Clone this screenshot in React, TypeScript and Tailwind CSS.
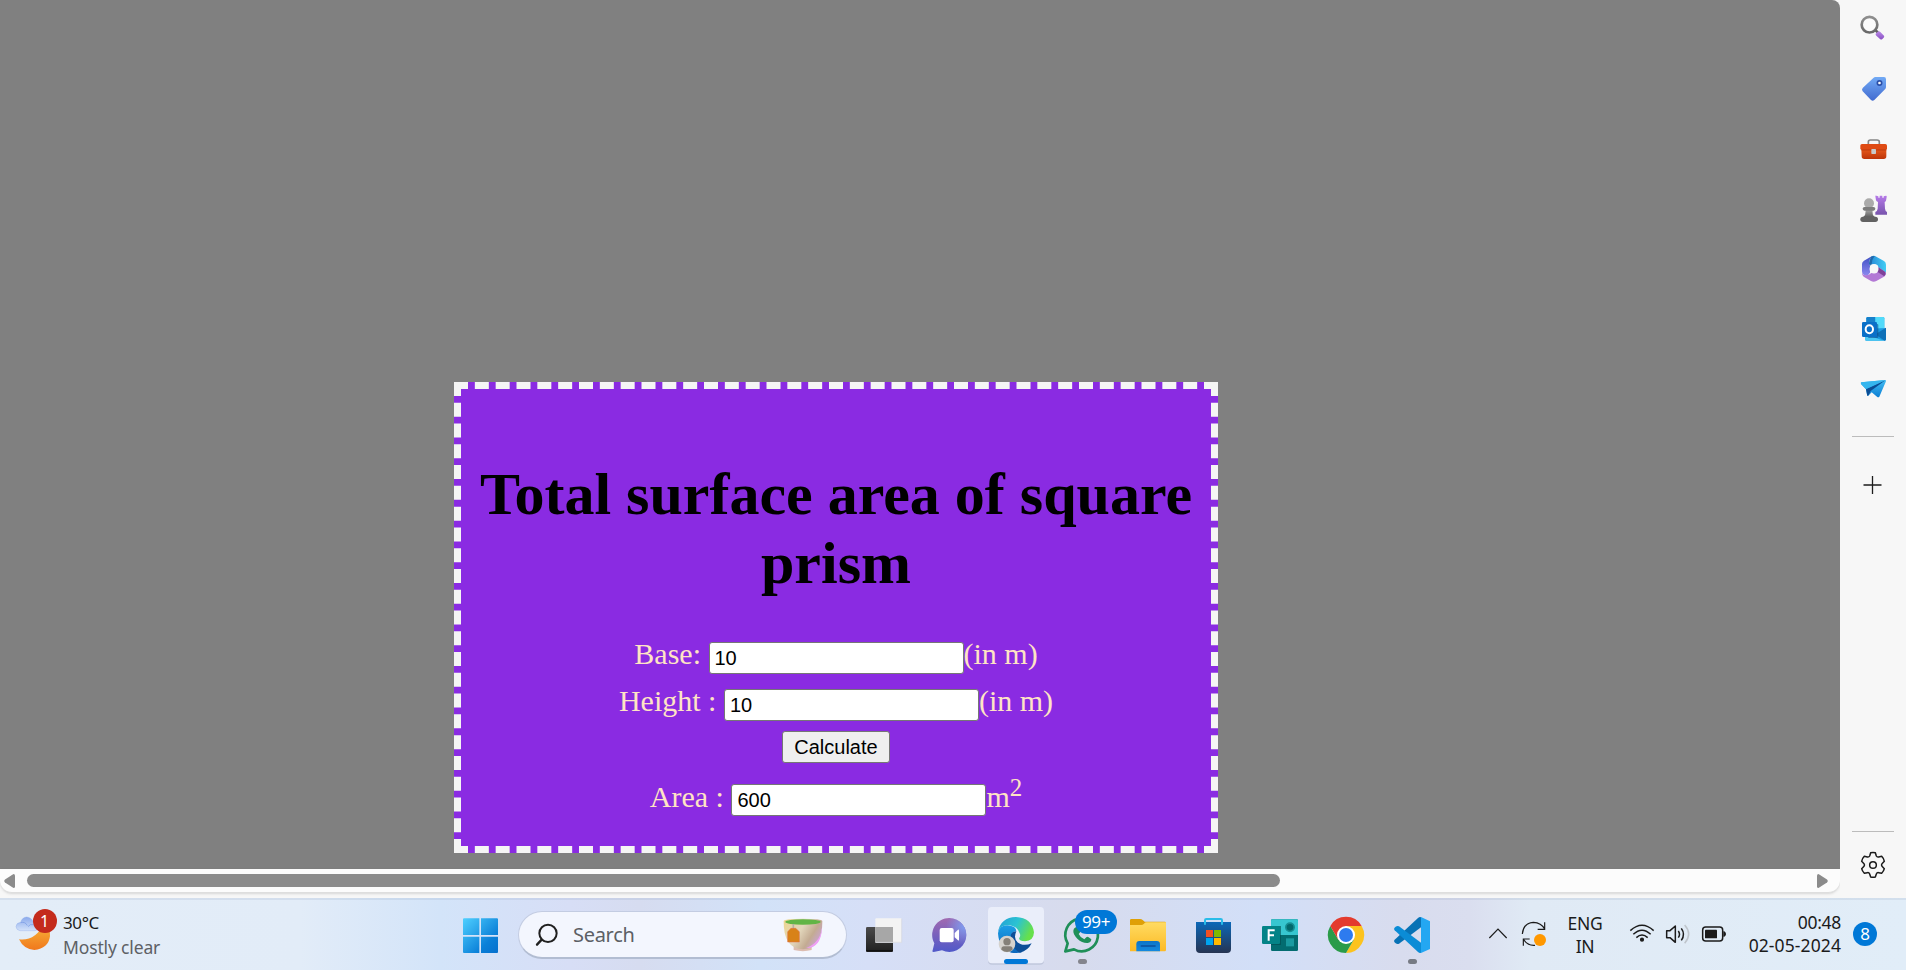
import React, { useState } from "react";

type TileProps = { box: string; className?: string; children: React.ReactNode };

function Tile({ box, className = "h-[72px] w-[66px]", children }: TileProps) {
  return (
    <svg viewBox={box} className={`block shrink-0 ${className}`} fill="none">
      {children}
    </svg>
  );
}

function Grad({ id, from, to, x2 = 0, y2 = 1 }: { id: string; from: string; to: string; x2?: number; y2?: number }) {
  return (
    <linearGradient id={id} x1="0" y1="0" x2={x2} y2={y2}>
      <stop stopColor={from} />
      <stop offset="1" stopColor={to} />
    </linearGradient>
  );
}

const side = "h-[60px] w-[66px]";

function Sidebar() {
  return (
    <aside className="flex w-[66px] shrink-0 flex-col bg-[#f7f7f7]">
      <Tile className={side} box="42 0 198 180">
        <Grad id="sh" from="#b98ae6" to="#8a50c4" />
        <Grad id="sr" from="#8f8f8f" to="#686868" />
        <path d="M146 88L156 98" stroke="#5f5f5f" strokeWidth="8" />
        <circle cx="130.500" cy="74" r="23.500" stroke="url(#sr)" strokeWidth="8" fill="#fbfbfb" />
        <path d="M149 101L157 94Q160 93 163 96L174 107Q176 110 173 113L169 117Q166 120 162 117L151 107Q148 104 149 101Z" fill="url(#sh)" />
      </Tile>
      <Tile className={side} box="42 180 198 180">
        <Grad id="tag" from="#72aaf5" to="#426bd0" />
        <path d="M148 231H174Q180 231 180 238V261Q180 265 177 268L145 300Q140 304 135 300L110 274Q106 269 110 264L142 234Q145 231 148 231Z" fill="url(#tag)" />
        <circle cx="160.500" cy="249" r="6.500" fill="white" stroke="#2b4fa8" strokeWidth="5" />
      </Tile>
      <Tile className={side} box="42 360 198 180">
        <Grad id="tb" from="#e85a1c" to="#bd3509" />
        <path d="M127 434V426Q127 420 133 420H153Q160 420 160 426V434" stroke="#858585" strokeWidth="5" />
        <path d="M106 446H181V469Q181 477 173 477H115Q107 477 107 469Z" fill="url(#tb)" />
        <rect x="103" y="432" width="80" height="18" rx="5" fill="#df4b14" />
        <path d="M106 450H181" stroke="#ad310a" strokeWidth="2" />
        <rect x="136" y="447" width="14" height="15" rx="2" fill="#c9c9c9" />
      </Tile>
      <Tile className={side} box="42 540 198 180">
        <Grad id="pa" from="#b5b5b5" to="#5c5c5c" />
        <Grad id="ro" from="#b67ae9" to="#7854ad" />
        <path d="M148 588Q148 586 151 587L157 589V593H161V587H169V593H173V589L180 587Q183 587 182 591L180 602Q179 604 176 606L177 626Q178 634 183 636V644H148V636Q154 634 155 626L156 606Q151 604 150 601Z" fill="url(#ro)" />
        <circle cx="129" cy="610" r="15" fill="#aaa" />
        <path d="M120 624H139L140 640Q140 649 150 652H108Q118 649 118 640Z" fill="url(#pa)" />
        <rect x="110" y="621" width="38" height="11" rx="5.500" fill="#7c7c7c" />
        <rect x="103" y="650" width="53" height="16" rx="8" fill="#626262" />
      </Tile>
      <Tile className={side} box="42 0 198 180">
        <Grad id="m1" from="#3f4fc4" to="#8e8af0" />
        <Grad id="m2" from="#2584d4" to="#43cdf4" x2={1} y2={0} />
        <path d="M135 50Q143 45 151 50L174 63Q180 67 180 74V98L157 82Q157 73 144 72L128 74Z" fill="url(#m2)" />
        <path d="M137 49L131 59Q127 69 132 78V98L124 108Q108 107 108 94V72Q108 66 114 62Z" fill="url(#m1)" />
        <path d="M108 98Q113 110 128 104L154 88L157 82L178 96Q183 104 174 110L151 123Q143 128 135 123L113 110Q108 106 108 98Z" fill="#b379d5" />
        <path d="M157 82L178 96Q181 102 175 109L156 97Z" fill="#7d4299" />
        <path d="M137 49L131 59Q127 69 132 78L137 73L139 60L146 48Z" fill="#195d9c" opacity=".75" />
        <circle cx="144" cy="87" r="13.500" fill="#f7f7f7" />
      </Tile>
      <Tile className={side} box="42 180 198 180">
        <rect x="121" y="231" width="54" height="62" rx="4" fill="#2faeea" />
        <path d="M121 247H148V231H125Q121 231 121 235Z" fill="#1680cb" />
        <path d="M148 231H171Q175 231 175 235V264H148Z" fill="#52dafa" />
        <path d="M118 272L180 264V298Q180 302 176 302H121Q117 302 117 298Z" fill="#1b9be2" />
        <path d="M180 263L148 283L176 302Q180 302 180 297Z" fill="#0e70b8" />
        <path d="M117 283L174 302H121Q117 302 117 298Z" fill="#4bc7f2" />
        <rect x="126" y="252" width="31" height="42" rx="3" fill="#0b4f8d" opacity=".6" />
        <rect x="108" y="246" width="45" height="45" rx="4" fill="#0a70c8" />
        <ellipse cx="130" cy="267.500" rx="11" ry="12" stroke="white" strokeWidth="6" />
      </Tile>
      <Tile className={side} box="42 360 198 180">
        <Grad id="pl" from="#43bdf2" to="#0b7ed4" />
        <path d="M106 427L178 420Q182 421 179 426L160 470Q157 474 153 470L137 457L127 467Q124 469 123 464L120 448L105 432Q103 428 106 427Z" fill="url(#pl)" />
        <path d="M178 421L120 448L124 467Q126 468 128 465L134 453Z" fill="#0b4d94" />
        <path d="M106 427L178 420L120 447L105 432Z" fill="#36b6ee" />
      </Tile>
      <div className="mt-4 ml-3 h-px w-[42px] bg-[#bcbcbc]" />
      <svg className="mt-[38px] ml-[22px] size-5" viewBox="0 0 20 20" stroke="#1d1d1d" strokeWidth="1.300">
        <path d="M10.500 1V19M1.500 10H19.500" />
      </svg>
      <div className="mt-auto ml-3 h-px w-[42px] bg-[#bcbcbc]" />
      <Tile className="h-[66px] w-[66px]" box="180 96 198 198">
        <path
          d="M272 158.500Q279 156.500 286 158.500L289 168Q291 172 296 171L305 169Q312 176 313 184L306 191Q303 195 306 199L313 206Q311 214 305 220L296 218Q291 217 289 222L286 231Q279 233 272 231L269 222Q267 217 262 218L253 220Q247 214 245 206L252 199Q255 195 252 191L245 184Q246 176 253 169L262 171Q267 172 269 168Z"
          stroke="#1a1a1a"
          strokeWidth="4.500"
          strokeLinejoin="round"
        />
        <circle cx="279" cy="195" r="10" stroke="#1a1a1a" strokeWidth="4.500" />
      </Tile>
    </aside>
  );
}

const field =
  "w-[255px] shrink-0 rounded-[3px] border border-[#767676] bg-white pl-[5px] font-['Liberation_Sans',sans-serif] text-[20px] text-black outline-none";

function Calculator() {
  const [base, setBase] = useState("10");
  const [height, setHeight] = useState("10");
  const [area, setArea] = useState("600");
  const calculate = () => setArea(String(2 * Number(base) ** 2 + 4 * Number(base) * Number(height)));

  return (
    <section className="ml-[454px] flex h-[471px] w-[764px] flex-col items-center border-[7px] border-dashed border-[whitesmoke] bg-[blueviolet] pt-[71px] text-[30px] leading-[34px] text-[bisque]">
      <h1 className="text-center text-[60px] leading-[69px] font-bold text-black">Total surface area of square prism</h1>
      <div className="mt-[39px] flex h-[47px] shrink-0 items-start whitespace-pre">
        <label>Base: </label>
        <input className={`mt-[5px] h-8 pb-px ${field}`} value={base} onChange={(e) => setBase(e.target.value)} />
        <span>(in m)</span>
      </div>
      <div className="flex h-[47px] shrink-0 items-start whitespace-pre">
        <label>Height : </label>
        <input className={`mt-[5px] h-8 pb-px ${field}`} value={height} onChange={(e) => setHeight(e.target.value)} />
        <span>(in m)</span>
      </div>
      <button
        onClick={calculate}
        className="h-8 w-[108px] shrink-0 rounded-[3px] border border-[#767676] bg-[#efefef] font-['Liberation_Sans',sans-serif] text-[20px] leading-[28px] text-black"
      >
        Calculate
      </button>
      <div className="mt-[17px] flex items-start whitespace-pre">
        <label>Area : </label>
        <input className={`mt-1 h-8 ${field}`} value={area} readOnly />
        <span>m</span>
        <span className="-mt-[9px] text-[25px]">2</span>
      </div>
    </section>
  );
}

function ScrollBar() {
  return (
    <div className="flex h-6 items-center rounded-b-xl border-b border-[#dedede] bg-[#fcfcfc] shadow-sm">
      <svg className="ml-1 h-[14px] w-[11px]" viewBox="0 0 11 14" fill="#8b8b8b">
        <path d="M9.500 0Q11 0 11 1.500V12.500Q11 14 9.500 14L1 8.500Q-.5 7 1 5.500Z" />
      </svg>
      <div className="ml-3 h-[13px] w-[1253px] rounded-full bg-[#8b8b8b]" />
      <svg className="mr-3 ml-auto h-[14px] w-[11px]" viewBox="0 0 11 14" fill="#8b8b8b">
        <path d="M1.500 0Q0 0 0 1.500V12.500Q0 14 1.500 14L10 8.500Q11.500 7 10 5.500Z" />
      </svg>
    </div>
  );
}

function Weather() {
  return (
    <div className="flex h-full w-[448px] items-start">
      <div className="relative">
        <Tile className="h-[72px] w-[63px]" box="0 114 189 216">
          <Grad id="moon" from="#f8b83c" to="#f0781c" />
          <Grad id="cloud" from="#8aa9ec" to="#d3e2fa" />
          <path d="M133 188Q151 205 150 229Q145 266 103 270Q71 268 57 238Q107 244 133 188Z" fill="url(#moon)" />
          <path d="M60 212Q49 210 48 200Q49 188 62 187Q66 172 80 171Q94 172 100 186Q116 188 116 200Q116 211 105 212Z" fill="url(#cloud)" stroke="#86a5e8" strokeWidth="1" />
          <path d="M62 188Q76 184 82 197M84 200Q90 191 101 194" stroke="#7598e4" strokeWidth="2" />
        </Tile>
        <span className="absolute top-[11px] left-[32.500px] flex size-6 items-center justify-center rounded-full bg-[#c42b1c] text-[16px] text-white">1</span>
      </div>
      <div className="mt-[13px] text-[17px] leading-6 tracking-[-0.4px]">
        <div className="text-[#1b1b1b]">30°C</div>
        <div className="text-[17.500px] tracking-[-0.150px] text-[#5d6064]">Mostly clear</div>
      </div>
    </div>
  );
}

function SearchBox() {
  return (
    <div className="mt-[2px] flex h-12 w-[329px] shrink-0 items-center rounded-full border border-b-2 border-[#c3cce2] border-b-[#b2bdd2] bg-[#f3f6fe]">
      <svg className="ml-4 size-6 shrink-0" viewBox="286 99 72 72" fill="none" stroke="#202020" strokeLinecap="round">
        <circle cx="325" cy="130" r="26" strokeWidth="6" />
        <path d="M306 149L292 164" strokeWidth="7" />
      </svg>
      <span className="ml-[14px] text-[20px] tracking-[-0.3px] text-[#5c5f65]">Search</span>
      <svg className="mr-[23px] ml-auto h-[34px] w-10" viewBox="1030 86 120 102" fill="none">
        <linearGradient id="cup" x1="0" y1="0" x2="1" y2=".5">
          <stop stopColor="#ecd68f" />
          <stop offset=".5" stopColor="#e2d6bb" />
          <stop offset=".8" stopColor="#c3ab92" />
          <stop offset="1" stopColor="#c9a5c8" />
        </linearGradient>
        <path d="M1062 170H1116V182Q1090 189 1062 182Z" fill="#dcbcb0" />
        <path d="M1032 95Q1034 88 1090 88Q1146 88 1148 95Q1149 178 1090 180Q1031 178 1032 95Z" fill="url(#cup)" />
        <path d="M1146 118Q1142 158 1100 176Q1143 176 1147 118Z" fill="#ef9ff6" />
        <ellipse cx="1090" cy="98" rx="53" ry="8" fill="#62b546" />
        <path d="M1061 104V120" stroke="#b9afa5" strokeWidth="5" />
        <path d="M1044 127L1054 117H1068L1079 127V158H1044Z" fill="#d88218" stroke="#e06b4a" strokeWidth="1.500" />
      </svg>
    </div>
  );
}

function Apps() {
  return (
    <div className="ml-1 flex">
      <Tile box="3 24 198 216">
        <Grad id="tv" from="#4b4b4b" to="#202020" />
        <rect x="48" y="111" width="81" height="75" rx="4" fill="url(#tv)" />
        <path d="M49 182H128" stroke="#111" strokeWidth="4" />
        <rect x="76" y="85" width="79" height="73" rx="3" fill="#f3f3f3" />
        <path d="M76 111H129V157H76Z" fill="#a7a7a7" />
        <path d="M76 157H155V86" stroke="#d4d7de" strokeWidth="2" />
      </Tile>
      <Tile box="201 24 198 216">
        <Grad id="chat" from="#a16ab0" to="#5059c9" />
        <radialGradient id="chatb" cx=".95" cy=".25" r=".55">
          <stop stopColor="#7f9df0" />
          <stop offset="1" stopColor="#7f9df0" stopOpacity="0" />
        </radialGradient>
        <path d="M298 84A51 51 0 1 1 276 181L251 186Q245 186 248 181L253 160A51 51 0 0 1 298 84Z" fill="url(#chat)" />
        <path d="M298 84A51 51 0 1 1 276 181L251 186Q245 186 248 181L253 160A51 51 0 0 1 298 84Z" fill="url(#chatb)" />
        <rect x="269" y="114" width="42" height="43" rx="6" fill="white" />
        <path d="M314 129L324 119Q327 118 327 122V149Q327 153 324 151L314 142Z" fill="white" />
      </Tile>
      <Tile box="399 24 198 216">
        <linearGradient id="ed" x1="0" y1="0" x2="1" y2=".35">
          <stop stopColor="#229dd6" />
          <stop offset=".55" stopColor="#2bc3d2" />
          <stop offset="1" stopColor="#66e04b" />
        </linearGradient>
        <Grad id="ed2" from="#1c9fe6" to="#0b67bd" />
        <rect x="414" y="54" width="168" height="170" rx="12" fill="#c0c7dc" />
        <rect x="414" y="51" width="168" height="169" rx="12" fill="#eaeefa" />
        <path d="M444 130Q447 106 472 106Q499 108 499 124Q482 125 482 145Q486 170 517 186Q502 191 484 188Q447 178 444 130Z" fill="url(#ed2)" />
        <path d="M482 140Q482 125 499 124Q487 151 511 162Q526 168 545 160Q534 182 510 188Q484 176 482 140Z" fill="#0d4f98" />
        <path d="M444 126Q452 82 498 81Q546 84 552 127Q551 153 525 154Q508 154 507 145Q512 141 510 132Q502 106 472 106Q450 107 444 126Z" fill="url(#ed)" />
        <circle cx="471" cy="162" r="25" fill="#d5d2cd" />
        <circle cx="471" cy="155" r="11" fill="#858078" />
        <path d="M454 179Q454 169 462 169H480Q488 169 488 179Q471 193 454 179Z" fill="#858078" />
        <rect x="462" y="207" width="72" height="15" rx="7.500" fill="#0078d7" />
      </Tile>
      <div className="relative">
        <Tile box="597 24 198 216">
          <path d="M646 184L653 160A49 49 0 1 1 672 178Z" stroke="#1f8f58" strokeWidth="8" strokeLinejoin="round" />
          <path d="M675 113Q681 108 686 114L691 124Q691 128 686 132Q691 143 703 148L709 142Q712 139 716 142L724 148Q724 157 713 159Q697 160 682 146Q669 132 670 122Q671 115 675 113Z" fill="#1f8f58" />
          <rect x="684" y="207" width="27" height="15" rx="7.500" fill="#84858d" />
        </Tile>
        <span className="absolute top-3 left-[26px] flex h-6 w-[42px] items-center justify-center rounded-full bg-[#0078d7] text-[17px] tracking-[-0.4px] text-white">99+</span>
      </div>
      <Tile box="-75 24 198 216">
        <Grad id="fo" from="#ffdb62" to="#fcba25" />
        <Grad id="fb" from="#0d74c7" to="#148ae0" />
        <path d="M-30 91Q-30 87 -26 87H0Q5 87 8 90L14 95H74Q78 95 78 99V118H-30Z" fill="#dfa007" />
        <path d="M-30 105H4Q8 105 12 101Q15 97 20 97H78V180Q78 184 74 184H-30Z" fill="url(#fo)" />
        <path d="M-11 184V162Q-11 153 -2 153H50Q60 153 60 163V184Z" fill="url(#fb)" />
        <path d="M4 168H45" stroke="#0b4f9c" strokeWidth="5" strokeLinecap="round" />
      </Tile>
      <Tile box="123 24 198 216">
        <Grad id="st" from="#0c68b8" to="#263452" />
        <path d="M168 96H273V177Q273 189 261 189H180Q168 189 168 177Z" fill="url(#st)" />
        <path d="M195 104V91Q195 87 199 87H242Q246 87 246 91V104" stroke="#29bce8" strokeWidth="6" />
        <path d="M198 120H219V141H198Z" fill="#f25022" />
        <path d="M222 120H243V141H222Z" fill="#7fba00" />
        <path d="M198 144H219V165H198Z" fill="#00a4ef" />
        <path d="M222 144H243V165H222Z" fill="#ffb900" />
      </Tile>
      <Tile box="321 24 198 216">
        <rect x="393" y="88" width="81" height="95" rx="4" fill="#036c70" />
        <path d="M393 135V92Q393 88 397 88H470Q474 88 474 92V135Z" fill="#37c6d0" />
        <circle cx="450" cy="112" r="12.500" fill="#03686c" stroke="#168d93" strokeWidth="5" />
        <rect x="438" y="145" width="24" height="24" fill="#1a9ba1" />
        <path d="M393 108H423V165H393Z" fill="#024b4e" opacity=".6" />
        <rect x="366" y="108" width="54" height="54" rx="4" fill="#038387" />
        <path d="M386 152V121H404M386 136H402" stroke="white" strokeWidth="6" />
      </Tile>
      <Tile box="519 24 198 216">
        <path d="M618 108H665A54 54 0 0 1 618 189L641 149Z" fill="#fcc31e" />
        <path d="M571 108A54 54 0 0 0 618 189L641 149L595 149Z" fill="#2a9b49" />
        <path d="M571 108L595 149L618 108H665A54 54 0 0 0 571 108Z" fill="#e33b2e" />
        <circle cx="618" cy="135" r="27" fill="white" />
        <circle cx="618" cy="135" r="21" fill="#2d7bef" />
      </Tile>
      <Tile box="717 24 198 216">
        <path d="M843 82V112L777 161Q772 164 767 160L763 156Q761 152 764 149L834 84Q839 80 843 82Z" fill="#0872b5" />
        <path d="M843 188V158L777 109Q772 106 767 110L763 114Q761 118 764 121L834 186Q839 190 843 188Z" fill="#0b8cd6" />
        <path d="M843 81L870 94V177L843 189Z" fill="#24a7f2" />
        <rect x="804" y="207" width="27" height="15" rx="7.500" fill="#777b84" />
      </Tile>
    </div>
  );
}

function Tray() {
  return (
    <div className="ml-auto flex text-[#1b1b1b]">
      <Tile className="h-[72px] w-[74px]" box="63 24 222 216">
        <path d="M88 144L114 117L140 144" stroke="#1b1b1b" strokeWidth="3.500" />
        <path d="M187 132Q190 99 220 97Q244 98 254 117M254 97V118H233M190 167V147H209M190 147Q202 168 225 166" stroke="#1b1b1b" strokeWidth="3.500" />
        <circle cx="240" cy="150" r="18" fill="#ff9800" />
      </Tile>
      <div className="mt-[14px] mr-[6px] w-[60px] text-center text-[17.500px] leading-[23px] tracking-[-0.3px]">
        ENG
        <br />
        IN
      </div>
      <Tile className="h-[72px] w-[123px]" box="483 24 369 216">
        <g stroke="#1b1b1b" strokeWidth="4.500">
          <path d="M511 122Q546 90 581 122M520 133Q546 108 572 133M529 143Q546 127 563 143" />
          <circle cx="546" cy="149" r="4" fill="#1b1b1b" />
          <path d="M620 122H630L646 108V157L630 143H620Z" strokeLinejoin="round" />
          <path d="M655 123Q662 133 655 143M664 115Q677 133 664 151" />
          <path d="M674 105Q698 132 674 160" stroke="#bfc5cc" />
          <rect x="728" y="111" width="60" height="42" rx="9" />
        </g>
        <rect x="735" y="119" width="36" height="26" rx="2" fill="#1b1b1b" />
        <path d="M790 124H793Q798 127 798 132T793 140H790Z" fill="#1b1b1b" />
      </Tile>
      <div className="mt-[13px] w-[97px] text-right text-[17.500px] leading-[23px] tracking-[0.1px] whitespace-nowrap">
        <div className="tracking-[-0.3px]">00:48</div>
        02-05-2024
      </div>
      <span className="mt-6 mr-[29px] ml-3 flex size-6 items-center justify-center rounded-full bg-[#0078d7] text-[17px] text-white">8</span>
    </div>
  );
}

export default function App() {
  return (
    <div className="flex h-[970px] w-[1906px] flex-col overflow-hidden bg-[#f7f7f7] font-['Liberation_Serif',serif]">
      <div className="flex h-[898px] shrink-0">
        <div className="flex w-[1840px] shrink-0 flex-col bg-[#f7f7f7]">
          <main className="h-[869px] rounded-tr-lg bg-[gray] pt-[382px]">
            <Calculator />
          </main>
          <ScrollBar />
        </div>
        <Sidebar />
      </div>
      <footer className="flex h-[72px] shrink-0 items-center bg-[linear-gradient(90deg,#e3edf8_0px,#e2ecf8_300px,#d3e4f9_440px,#d7def6_570px,#d6dcf0_640px,#d2e2f8_760px,#d6dff7_870px,#d7dbed_1070px,#d2dff8_1260px,#d8dcee_1400px,#dadeef_1470px,#e0eaf5_1530px,#e1edf8_1906px)] font-['Noto_Sans',sans-serif] shadow-[inset_0_2px_0_rgba(120,140,170,0.14)]">
        <Weather />
        <Tile className="h-[72px] w-[70px]" box="24 24 210 216">
          <linearGradient id="win" gradientUnits="userSpaceOnUse" x1="69" y1="85" x2="174" y2="189">
            <stop stopColor="#4fd0ff" />
            <stop offset=".7" stopColor="#0b80d8" />
            <stop offset="1" stopColor="#0670cd" />
          </linearGradient>
          <path d="M71 85H118V135H69V87ZM123 85H172L174 87V135H123ZM69 140H118V189H71L69 187ZM123 140H174V187L172 189H123Z" fill="url(#win)" />
        </Tile>
        <SearchBox />
        <Apps />
        <Tray />
      </footer>
    </div>
  );
}
